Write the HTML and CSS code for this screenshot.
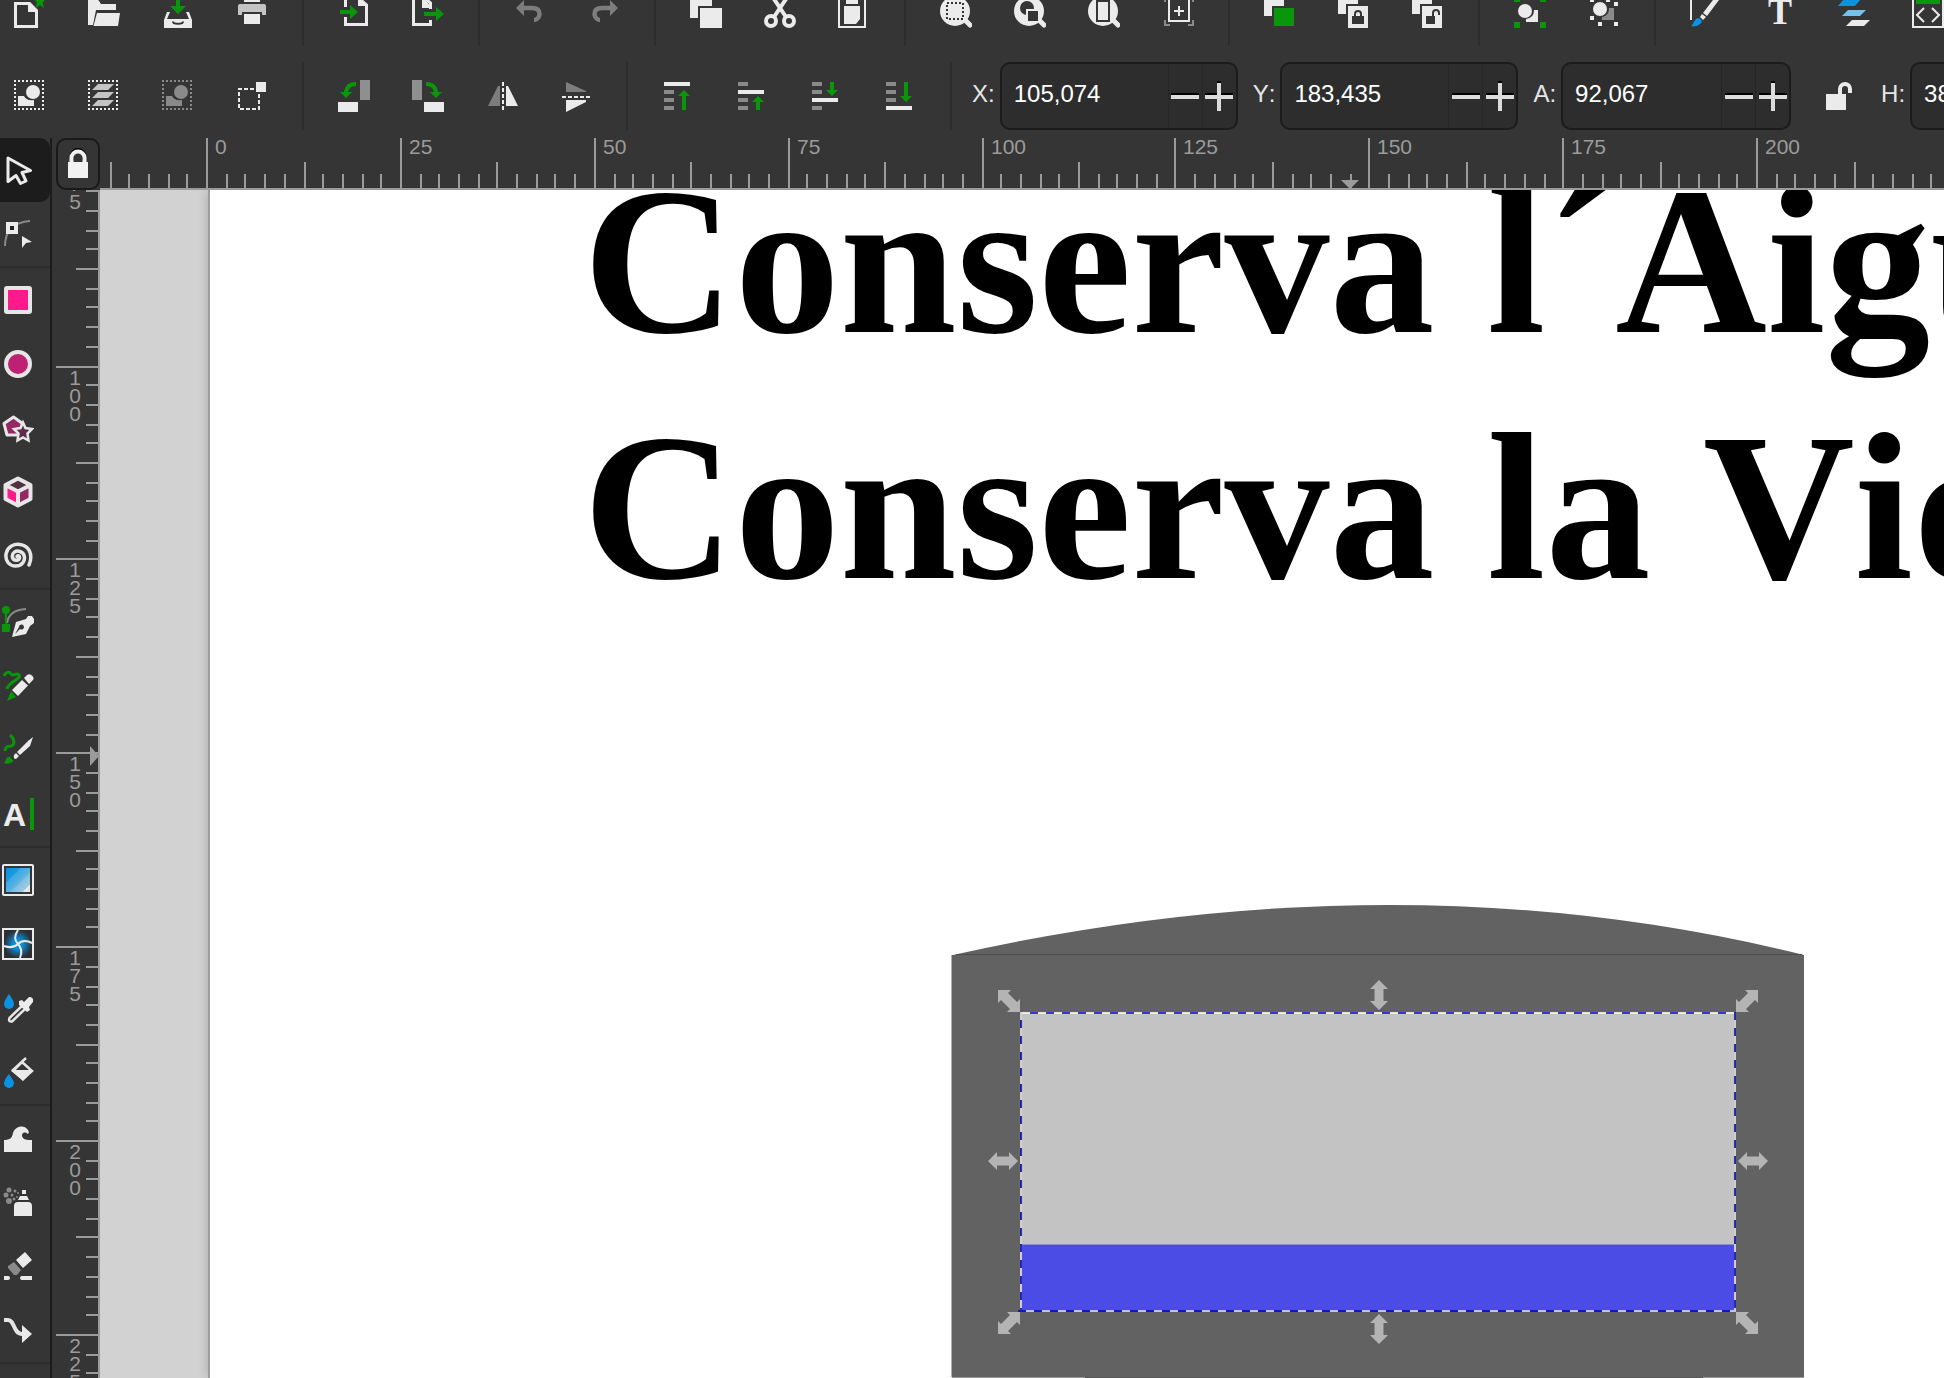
FILE: index.html
```html
<!DOCTYPE html>
<html lang="ca">
<head>
<meta charset="utf-8">
<title>Inkscape</title>
<link rel="stylesheet" href="styles.css">
</head>
<body>
<header class="bars">
  <nav class="bar commands" aria-label="Commands">
    <button class="cmd" aria-label="New"><svg class="icon" viewBox="0 0 32 32"><path class="line3" d="M1.5 7.5H15.5L22.5 14.5V30.500H1.500Z"/><path class="w" d="M14 7v9h9z"/><path class="g" d="M26 -1l1.500 4h4.500l-3.500 3.500 1.500 5.500-4-3-4.500 3 1.500-5.500L20 3h4.500z"/></svg></button>
    <button class="cmd" aria-label="Open"><svg class="icon" viewBox="0 0 32 32"><path class="w" d="M0 2H9L13 8H28V14H8L5 29H0ZM9 17H32L30 30H5.500Z"/></svg></button>
    <button class="cmd" aria-label="Save"><svg class="icon" viewBox="0 0 32 32"><path class="w" d="M5 16H8L5 23H27L24 16H27L30 24V32H2V24Z"/><path d="M11 25.500C11 28.500 21 28.500 21 25.500" fill="none" stroke="#353535" stroke-width="2"/><path class="g" d="M14 0h4v10h6l-8 8-8-8h6z"/></svg></button>
    <button class="cmd" aria-label="Print"><svg class="icon" viewBox="0 0 32 32"><path class="w" d="M8 0H24V6H8Z"/><path class="s" d="M4 8H28a2 2 0 0 1 2 2V19H26V16H6V19H2V10a2 2 0 0 1 2-2Z"/><path class="w" d="M8 18H24V28H8Z"/></svg></button>
    <span class="sep"></span>
    <button class="cmd" aria-label="Import"><svg class="icon" viewBox="0 0 32 32"><path class="line3" d="M7.500 11V1.500H20L28.500 9V28.500H7.500V21"/><path class="w" d="M20 0v10h10z"/><path class="g" d="M2 14h10V9l8 7-8 7v-5H2z"/></svg></button>
    <button class="cmd" aria-label="Export"><svg class="icon" viewBox="0 0 32 32"><path class="line3" d="M18.500 13V7L12 1.500H1.500V28.500H18.500V24"/><path class="w" d="M10 0v12h10z"/><path class="g" d="M12 16h12v-5l8 7-8 7v-5H12z"/></svg></button>
    <span class="sep"></span>
    <button class="cmd" aria-label="Undo"><svg class="icon" viewBox="0 0 32 32"><path d="M9 12H18C24 12 25.500 15 25.500 18S23 24 20 24" fill="none" stroke="#7d7d7d" stroke-width="4.500"/><path fill="#7d7d7d" d="M2 12L10 4V20Z"/></svg></button>
    <button class="cmd" aria-label="Redo"><svg class="icon" viewBox="0 0 32 32"><path d="M23 12H14C8 12 6.500 15 6.500 18S9 24 12 24" fill="none" stroke="#7d7d7d" stroke-width="4.500"/><path fill="#7d7d7d" d="M30 12L22 4V20Z"/></svg></button>
    <span class="sep"></span>
    <button class="cmd" aria-label="Copy"><svg class="icon" viewBox="0 0 32 32"><path class="w" d="M0 0H22V10H8V22H0ZM10 12H32V32H10Z"/></svg></button>
    <button class="cmd" aria-label="Cut"><svg class="icon" viewBox="0 0 32 32"><g fill="none" stroke="#ebebeb"><ellipse cx="7" cy="25" rx="5" ry="5" stroke-width="4"/><ellipse cx="25" cy="25" rx="5" ry="5" stroke-width="4"/><path d="M10 21L24 0M22 21L8 0" stroke-width="4"/></g></svg></button>
    <button class="cmd" aria-label="Paste"><svg class="icon" viewBox="0 0 32 32"><path class="line2" d="M1 1H27V31H1Z"/><path class="w" d="M8 0H20V8H8ZM6 10H22V23L18 28H6Z"/></svg></button>
    <span class="sep"></span>
    <button class="cmd" aria-label="Zoom to selection"><svg class="icon" viewBox="0 0 32 32"><path d="M24 23L30 29" stroke="#ebebeb" stroke-width="5" stroke-linecap="round"/><circle class="w" cx="15" cy="15" r="15"/><path d="M7 7H23V23H7Z" fill="none" stroke="#353535" stroke-width="2" stroke-dasharray="2 2"/></svg></button>
    <button class="cmd" aria-label="Zoom to drawing"><svg class="icon" viewBox="0 0 32 32"><path d="M24 23L30 29" stroke="#ebebeb" stroke-width="5" stroke-linecap="round"/><circle class="w" cx="15" cy="15" r="15"/><circle cx="13" cy="12" r="7" fill="#353535"/><path d="M13 14H25V26H13Z" fill="#353535" stroke="#ebebeb" stroke-width="2"/></svg></button>
    <button class="cmd" aria-label="Zoom to page"><svg class="icon" viewBox="0 0 32 32"><path d="M24 23L30 29" stroke="#ebebeb" stroke-width="5" stroke-linecap="round"/><circle class="w" cx="15" cy="15" r="15"/><path d="M9 5H21V25H9Z" fill="none" stroke="#353535" stroke-width="2"/></svg></button>
    <button class="cmd" aria-label="Center page"><svg class="icon" viewBox="0 0 32 32"><path class="line2" d="M7 3H27V25H7ZM17 10V20M12 15H22"/><path d="M3 24V29H8M26 29H31V24M3 6V1H8M26 1H31V6" fill="none" stroke="#8a8a8a" stroke-width="2"/></svg></button>
    <span class="sep"></span>
    <button class="cmd" aria-label="Duplicate"><svg class="icon" viewBox="0 0 32 32"><path class="w" d="M0 0H20V10H8V20H0Z"/><path class="g" d="M10 12H30V30H10Z"/></svg></button>
    <button class="cmd" aria-label="Clone"><svg class="icon" viewBox="0 0 32 32"><path class="w" d="M0 0H20V8H8V18H0ZM10 10H30V32H10Z"/><path fill="#353535" d="M14 20H26V28H14Z"/><path d="M17 21V18a3 3 0 0 1 6 0V21" fill="none" stroke="#353535" stroke-width="2"/></svg></button>
    <button class="cmd" aria-label="Unlink clone"><svg class="icon" viewBox="0 0 32 32"><path class="w" d="M0 0H20V8H8V18H0ZM10 10H30V32H10Z"/><path fill="#353535" d="M14 20H23V28H14Z"/><path d="M21 21V17a3 3 0 0 1 6 0V19" fill="none" stroke="#353535" stroke-width="2"/></svg></button>
    <span class="sep"></span>
    <button class="cmd" aria-label="Group"><svg class="icon" viewBox="0 0 32 32"><path class="g" d="M0 0H6V6H0ZM26 0H32V6H26ZM0 26H6V32H0ZM26 26H32V32H26Z"/><path class="w" d="M12 26V23Q20 22 20 14H24V26Z"/><circle class="w" cx="11" cy="15" r="7"/></svg></button>
    <button class="cmd" aria-label="Ungroup"><svg class="icon" viewBox="0 0 32 32"><path class="w" d="M2 2H6V6H2ZM2 20H6V24H2ZM10 26H14V30H10ZM26 26H30V30H26ZM26 6H30V10H26ZM18 2H22V6H18Z"/><path fill="#8a8a8a" d="M14 24V21Q21 20 21 12H26V24Z"/><circle class="w" cx="12" cy="13" r="7"/></svg></button>
    <span class="sep"></span>
    <button class="cmd" aria-label="Fill and stroke"><svg class="icon" viewBox="0 0 32 32"><path class="w" d="M0 0H2V24H0ZM26 0H32L17 20L13 17Z"/><path class="w" d="M12 18L16 21L13 24L10 21Z"/><path class="b" d="M9 22L12 25C11 29 6 31 1 30C4 28 4 22 9 22Z"/></svg></button>
    <button class="cmd" aria-label="Text and font"><svg class="icon" viewBox="0 0 32 32"><text class="serif-t" x="16" y="28" text-anchor="middle">T</text></svg></button>
    <button class="cmd" aria-label="Layers and objects"><svg class="icon" viewBox="0 0 32 32"><path class="b" d="M6 3H23L17 10H0Z"/><path fill="#74c1ec" d="M10 14H28L22 20H4Z"/><path class="w" d="M14 24H32L26 30H8Z"/></svg></button>
    <button class="cmd" aria-label="XML editor"><svg class="icon" viewBox="0 0 32 32"><path class="line2" d="M1 1H31V31H1ZM12 12L5 19L12 26M20 12L27 19L20 26"/><path class="g" d="M4 3H28V8H4Z"/></svg></button>
  </nav>

  <nav class="bar controls" aria-label="Selection controls">
    <button class="cmd" aria-label="Select all"><svg class="icon" viewBox="0 0 32 32"><path class="line2" stroke-dasharray="2 2" d="M0 1H30M29 0V30M30 29H0M1 30V0"/><path class="w" d="M4 26V16H10Q12 21 20 20V26Z"/><circle class="w" cx="19" cy="12" r="7"/></svg></button>
    <button class="cmd" aria-label="Select in all layers"><svg class="icon" viewBox="0 0 32 32"><path class="line2" stroke-dasharray="2 2" d="M0 1H30M29 0V30M30 29H0M1 30V0"/><path class="s" d="M10 4H26L20 10H4ZM10 12H26L20 18H4ZM10 20H26L20 26H4Z"/></svg></button>
    <button class="cmd" aria-label="Deselect"><svg class="icon" viewBox="0 0 32 32"><path fill="none" stroke="#8a8a8a" stroke-width="2" stroke-dasharray="2 2" d="M0 1H30M29 0V30M30 29H0M1 30V0"/><path fill="#8a8a8a" d="M4 26V16H10Q12 21 20 20V26Z"/><circle fill="#8a8a8a" cx="19" cy="12" r="7"/></svg></button>
    <button class="cmd" aria-label="Rubber-band select"><svg class="icon" viewBox="0 0 32 32"><path class="line2" stroke-dasharray="4 2" d="M18 9H3V29H23V13"/><path class="w" d="M20 2H30V12H20Z"/></svg></button>
    <span class="sep"></span>
    <button class="cmd" aria-label="Rotate left"><svg class="icon" viewBox="0 0 32 32"><path fill="#8f8f8f" d="M22 0H32V20H22Z"/><path class="w" d="M0 22H20V32H0Z"/><path d="M18 4Q8 4 8 14" fill="none" stroke="#0a960a" stroke-width="4"/><path class="g" d="M2 12H14L8 18Z"/></svg></button>
    <button class="cmd" aria-label="Rotate right"><svg class="icon" viewBox="0 0 32 32"><path fill="#8f8f8f" d="M0 0H10V20H0Z"/><path class="w" d="M12 22H32V32H12Z"/><path d="M14 4Q24 4 24 14" fill="none" stroke="#0a960a" stroke-width="4"/><path class="g" d="M18 12H30L24 18Z"/></svg></button>
    <button class="cmd" aria-label="Flip horizontal"><svg class="icon" viewBox="0 0 32 32"><path fill="#7d7d7d" d="M12 6H14V26H2Z"/><path class="w" d="M20 6H22L32 26H20Z"/><path class="line2" stroke-dasharray="4 2" d="M17 2V30"/></svg></button>
    <button class="cmd" aria-label="Flip vertical"><svg class="icon" viewBox="0 0 32 32"><path fill="#7d7d7d" d="M6 2L26 11V12H6Z"/><path class="w" d="M6 20H26V22L6 32Z"/><path class="line2" stroke-dasharray="4 2" d="M2 17H30"/></svg></button>
    <span class="sep"></span>
    <button class="cmd" aria-label="Raise to top"><svg class="icon" viewBox="0 0 32 32"><path class="w" d="M2 2H28V6H2Z"/><path fill="#8a8a8a" d="M2 10H12V14H2ZM2 18H12V22H2ZM2 26H12V30H2Z"/><path class="g" d="M20 30V16H16L22 10L28 16H24V30Z"/></svg></button>
    <button class="cmd" aria-label="Raise"><svg class="icon" viewBox="0 0 32 32"><path class="w" d="M2 10H28V14H2Z"/><path fill="#8a8a8a" d="M2 2H12V6H2ZM2 18H12V22H2ZM2 26H12V30H2Z"/><path class="g" d="M20 30V22H16L22 16L28 22H24V30Z"/></svg></button>
    <button class="cmd" aria-label="Lower"><svg class="icon" viewBox="0 0 32 32"><path class="w" d="M2 18H28V22H2Z"/><path fill="#8a8a8a" d="M2 2H12V6H2ZM2 10H12V14H2ZM2 26H12V30H2Z"/><path class="g" d="M20 2V10H16L22 16L28 10H24V2Z"/></svg></button>
    <button class="cmd" aria-label="Lower to bottom"><svg class="icon" viewBox="0 0 32 32"><path class="w" d="M2 26H28V30H2Z"/><path fill="#8a8a8a" d="M2 2H12V6H2ZM2 10H12V14H2ZM2 18H12V22H2Z"/><path class="g" d="M20 2V16H16L22 22L28 16H24V2Z"/></svg></button>
    <span class="sep"></span>
    <div class="fields">
      <div class="field">
        <label for="pos-x">X:</label>
        <div class="spin"><input id="pos-x" type="text" value="105,074"><button aria-label="Decrease X"><svg class="step" viewBox="0 0 28 30"><path d="M0 12H28V14H0Z"/><path class="st" d="M0 14H28V18H0Z"/></svg></button><button aria-label="Increase X"><svg class="step" viewBox="0 0 28 30"><path d="M0 12H28V14H0ZM12 0H16V4H12Z"/><path class="st" d="M0 14H12V2H16V14H28V18H16V30H12V18H0Z"/></svg></button></div>
      </div>
      <div class="field">
        <label for="pos-y">Y:</label>
        <div class="spin"><input id="pos-y" type="text" value="183,435"><button aria-label="Decrease Y"><svg class="step" viewBox="0 0 28 30"><path d="M0 12H28V14H0Z"/><path class="st" d="M0 14H28V18H0Z"/></svg></button><button aria-label="Increase Y"><svg class="step" viewBox="0 0 28 30"><path d="M0 12H28V14H0ZM12 0H16V4H12Z"/><path class="st" d="M0 14H12V2H16V14H28V18H16V30H12V18H0Z"/></svg></button></div>
      </div>
      <div class="field">
        <label for="size-w">A:</label>
        <div class="spin narrow"><input id="size-w" type="text" value="92,067"><button aria-label="Decrease width"><svg class="step" viewBox="0 0 28 30"><path d="M0 12H28V14H0Z"/><path class="st" d="M0 14H28V18H0Z"/></svg></button><button aria-label="Increase width"><svg class="step" viewBox="0 0 28 30"><path d="M0 12H28V14H0ZM12 0H16V4H12Z"/><path class="st" d="M0 14H12V2H16V14H28V18H16V30H12V18H0Z"/></svg></button></div>
      </div>
      <button class="ratio" aria-label="Lock ratio"><svg class="icon" viewBox="0 0 32 32"><path class="w" d="M6 14H26V30H6Z"/><path d="M20 15V9a5 5 0 0 1 10 0V13" fill="none" stroke="#ebebeb" stroke-width="4"/></svg></button>
      <div class="field">
        <label for="size-h">H:</label>
        <div class="spin narrow"><input id="size-h" type="text" value="38,474"><button aria-label="Decrease height"><svg class="step" viewBox="0 0 28 30"><path d="M0 12H28V14H0Z"/><path class="st" d="M0 14H28V18H0Z"/></svg></button><button aria-label="Increase height"><svg class="step" viewBox="0 0 28 30"><path d="M0 12H28V14H0ZM12 0H16V4H12Z"/><path class="st" d="M0 14H12V2H16V14H28V18H16V30H12V18H0Z"/></svg></button></div>
      </div>
    </div>
  </nav>
</header>

<main class="work">
  <nav class="toolbox" aria-label="Tools">
    <button class="tool active" aria-label="Selector"><svg class="icon" viewBox="0 0 32 32"><path class="line3" stroke-linejoin="round" d="M6 4L28.500 16.500L20 18.500L24 27L18.500 29.500L14 21.500L6 27.500Z"/></svg></button>
    <button class="tool" aria-label="Node"><svg class="icon" viewBox="0 0 32 32"><path d="M3 28Q3 5 28 3" fill="none" stroke="#8a8a8a" stroke-width="2"/><path d="M6 6H14V14H6Z" fill="#222" stroke="#ebebeb" stroke-width="4"/><path class="w" d="M20 18L30 24L24 25L20 30Z"/></svg></button>
    <hr>
    <button class="tool" aria-label="Rectangle"><svg class="icon" viewBox="0 0 32 32"><rect x="4" y="4" width="24" height="24" rx="1" fill="#ff1a8c" stroke="#e6e6e6" stroke-width="4"/></svg></button>
    <button class="tool" aria-label="Ellipse"><svg class="icon" viewBox="0 0 32 32"><circle cx="16" cy="16" r="12" fill="#be2172" stroke="#e6e6e6" stroke-width="4"/></svg></button>
    <button class="tool" aria-label="Star"><svg class="icon" viewBox="0 0 32 32"><path d="M11.500 5L20.500 11.500L17.500 23H5L2 11.500Z" fill="#942863" stroke="#e6e6e6" stroke-width="3" stroke-linejoin="round"/><path d="M21 10.500L23.500 16L30 17L25.500 21.500L26.500 28.500L21 25.500L15.500 28.500L16.500 21.500L12 17L18.500 16Z" fill="#5c2c48" stroke="#e6e6e6" stroke-width="2.500"/></svg></button>
    <button class="tool" aria-label="3D box"><svg class="icon" viewBox="0 0 32 32"><path fill="#503042" d="M16 3L28 9L16 15L4 9Z"/><path fill="#ff1a8c" d="M4 9L16 15V29L4 23Z"/><path fill="#942863" d="M28 9L16 15V29L28 23Z"/><path d="M16 2.500L28.500 9V23L16 29.500L3.500 23V9ZM3.500 9L16 15.500L28.500 9M16 15V29" fill="none" stroke="#e6e6e6" stroke-width="4" stroke-linejoin="round"/></svg></button>
    <button class="tool" aria-label="Spiral"><svg class="icon" viewBox="0 0 32 32"><path d="M15 16.500C15 15 18 15.500 17.500 18C17 21 11.500 21 10.500 17.500C9.500 12.500 14 10 18 11.500C23 13 23.500 19 21 22.500C17.500 27.500 9.500 27 6 22.500C2 17 4 9 9.500 6C16 2.500 24.500 5 27.500 11C29.500 15.500 29 20.500 27 25" fill="none" stroke="#e6e6e6" stroke-width="3.500" stroke-linecap="round"/></svg></button>
    <hr>
    <button class="tool" aria-label="Pen"><svg class="icon" viewBox="0 0 32 32"><path d="M5 17Q7 4 24 3" fill="none" stroke="#8a8a8a" stroke-width="2"/><circle class="g" cx="4" cy="4" r="4"/><path class="g" d="M3 4H5V18H8V26H0V18H3Z"/><path class="w" fill-rule="evenodd" d="M10 31L14 16L24 13L26 10H30L32 13V17L28 20L24 28ZM13 28L18 23A2.500 2.500 0 1 0 17 21Z"/></svg></button>
    <button class="tool" aria-label="Pencil"><svg class="icon" viewBox="0 0 32 32"><path d="M2 6C4 1 8 2 9 4C11 7 14 2 17 5C20 9 6 12 5 19" fill="none" stroke="#0a960a" stroke-width="3"/><path class="g" d="M9 21L14 27L5 31Z"/><path class="w" d="M10 20L20 10L26 15.500L16 26ZM22 8L25 5Q28 3 30.500 6T30 11L27 14Z"/></svg></button>
    <button class="tool" aria-label="Calligraphy"><svg class="icon" viewBox="0 0 32 32"><path d="M8 1C13 5 13 11 9 12C5 12 3 14 3 17" fill="none" stroke="#0a960a" stroke-width="3"/><path class="g" d="M8 23L11.500 27Q8 31 2 29Q4 27 4 25Q6 22 8 23Z"/><path class="w" d="M31 3L28 12L18 21L15 18L26 7ZM14 19L17 22L14 25Q11 25 12 21Z"/></svg></button>
    <button class="tool" aria-label="Text"><svg class="icon" viewBox="0 0 32 32"><text class="sans-a" x="1" y="28">A</text><path class="g" d="M28 0H32V32H28Z"/></svg></button>
    <hr>
    <button class="tool" aria-label="Gradient"><svg class="icon" viewBox="0 0 32 32"><defs><linearGradient id="lg" x1="0" y1="0" x2="1" y2="1"><stop offset="0" stop-color="#078fdf"/><stop offset=".3" stop-color="#1c9be2"/><stop offset=".3" stop-color="#3aa7e3"/><stop offset=".6" stop-color="#62b5e3"/><stop offset=".6" stop-color="#7fbfe3"/><stop offset=".85" stop-color="#9dcbe4"/><stop offset=".85" stop-color="#e6e6e6"/></linearGradient></defs><rect class="line2" x="1" y="1" width="30" height="30" rx="1"/><path fill="url(#lg)" d="M4 4H28V28H4Z"/></svg></button>
    <button class="tool" aria-label="Mesh"><svg class="icon" viewBox="0 0 32 32"><defs><radialGradient id="rg"><stop offset="0" stop-color="#0a93e2"/><stop offset=".4" stop-color="#0f86cb"/><stop offset="1" stop-color="#2b2f33"/></radialGradient></defs><path fill="url(#rg)" d="M2 2H30V30H2Z"/><path class="line2" d="M16 16C12 12 12 8 16 2M16 16C20 12 24 12 30 15M16 16C20 20 20 25 18 30M16 16C12 20 8 20 2 18"/><rect class="line2" x="1" y="1" width="30" height="30"/></svg></button>
    <button class="tool" aria-label="Dropper"><svg class="icon" viewBox="0 0 32 32"><path class="b" d="M7 2Q12 9 12 12A5 5 0 0 1 2 12Q2 9 7 2Z"/><path d="M21 13L7.500 26Q6 30 10 29.500L24 16" fill="none" stroke="#e6e6e6" stroke-width="2.500"/><path class="w" d="M17 9L20 8L22 10L27 5Q32 5 31 10L27 15L28 18L25 20L17 13Z"/></svg></button>
    <button class="tool" aria-label="Paint bucket"><svg class="icon" viewBox="0 0 32 32"><path class="b" d="M7 18Q12 25 12 27A5 5 0 0 1 2 27Q2 24 7 18Z"/><path d="M24 2L10 15M20 6L30 15L21 23L11 15Z" fill="none" stroke="#e6e6e6" stroke-width="2.500"/><path class="w" d="M9 14H31L21 25Z"/></svg></button>
    <hr>
    <button class="tool" aria-label="Tweak"><svg class="icon" viewBox="0 0 32 32"><path class="w" d="M2 18C8 18 10 16 11 11C13 4 22 2 26 8C27 10 27 11 26 12C22 9 20 11 20 14C21 18 25 18 30 18V30H2Z"/></svg></button>
    <button class="tool" aria-label="Spray"><svg class="icon" viewBox="0 0 32 32"><path class="w" d="M20 4H24V8H20ZM18 10H25L27 14H16ZM12 30V20Q12 16 16 16H26Q30 16 30 20V30Z"/><g fill="#8a8a8a"><circle cx="7" cy="4" r="2.500"/><circle cx="4" cy="9" r="2.500"/><circle cx="7" cy="15" r="3"/><circle cx="13" cy="5" r="1.500"/><circle cx="10" cy="9" r="1.500"/><circle cx="12" cy="13" r="1.500"/><circle cx="16" cy="7" r="1"/><circle cx="15" cy="11" r="1"/></g></svg></button>
    <button class="tool" aria-label="Eraser"><svg class="icon" viewBox="0 0 32 32"><path class="w" d="M23 2L30 10L21 18L14 10ZM2 26H6Q8 26 8 28T6 30H2ZM18 28Q18 26 20 26H30V30H20Q18 30 18 28Z"/><path fill="#8a8a8a" d="M12 12L19 20L15 25H12L6 18V16Z"/></svg></button>
    <button class="tool" aria-label="Connector"><svg class="icon" viewBox="0 0 32 32"><path d="M2 6H6C13 6 11 20 20 20H22" fill="none" stroke="#e6e6e6" stroke-width="4"/><path class="w" d="M20 11L30 20L20 29Z"/></svg></button>
    <hr>
  </nav>

  <section class="desk">
    <button class="guide-lock" aria-label="Lock guides"><svg width="20" height="32" viewBox="0 0 20 32"><path d="M4 12V8a6 6 0 0 1 12 0V12" fill="none" stroke="#000" stroke-width="4"/><path d="M3.500 16V10a6.500 6.500 0 0 1 13 0V16" fill="none" stroke="#f2f2f2" stroke-width="4"/><path fill="#f2f2f2" d="M0 14H20V30H0Z"/></svg></button>
    <svg class="ruler ruler-h" id="ruler-h"></svg>
    <svg class="ruler ruler-v" id="ruler-v"></svg>
    <div class="canvas">
      <div class="page"></div>
      <svg class="art">
        <defs>
          <path id="diag" d="M0 0H13L10 3L19 12L22 9V22H9L12 19L3 10L0 13Z"/>
          <path id="vert" d="M0 -15L9 -6H4.500V6H9L0 15L-9 6H-4.500V-6H-9Z"/>
        </defs>
        <g transform="translate(-100 -190)">
          <text class="headline" x="583" y="332">Conserva l´Aigua</text>
          <text class="headline" x="583" y="578">Conserva la Vida</text>
          <path fill="#626262" d="M953 955Q1400 855 1804 955Z"/>
          <path fill="#626262" d="M951.500 955H1804V1377H951.500Z"/>
          <path fill="#4d4d4d" d="M956 954H1802V955H956Z"/>
          <path fill="#999" d="M952 1377H1804V1378H952Z"/>
          <path fill="#555" d="M1085 1377H1703V1378H1085Z"/>
          <path fill="#c3c3c3" d="M1021 1013H1735V1311H1021Z"/>
          <path fill="#4b4be6" d="M1021 1245H1735V1311H1021Z"/>
          <path fill="#8c8cc0" d="M1021 1244H1735V1245H1021Z"/>
          <g fill="none" stroke-width="2">
            <path stroke="#ebe9e4" d="M1020 1013H1736"/>
            <path stroke="#cfcfcf" d="M1021 1012V1312M1735 1012V1312"/>
            <path stroke="#c3c3ee" d="M1020 1311H1736"/>
            <g stroke-dasharray="8 8">
              <path stroke="#3a3ac6" d="M1030 1013H1734"/>
              <path stroke="#2828a8" d="M1021 1020V1312M1735 1012V1312"/>
              <path stroke="#1414cc" d="M1018 1311H1734"/>
            </g>
          </g>
          <g fill="#b4b4b4">
            <use href="#diag" transform="translate(998 990)"/>
            <use href="#diag" transform="translate(1758 990) scale(-1 1)"/>
            <use href="#diag" transform="translate(1020 1312) scale(-1 1)"/>
            <use href="#diag" transform="translate(1736 1312)"/>
            <use href="#vert" transform="translate(1379 995)"/>
            <use href="#vert" transform="translate(1379 1329)"/>
            <use href="#vert" transform="translate(1003 1161) rotate(90)"/>
            <use href="#vert" transform="translate(1753 1161) rotate(90)"/>
          </g>
        </g>
      </svg>
    </div>
  </section>
</main>
<script src="rulers.js"></script>
</body>
</html>
```
FILE: styles.css
```css
* { box-sizing: border-box; }

body {
  margin: 0;
  height: 100vh;
  display: flex;
  flex-direction: column;
  overflow: hidden;
  background: #353535;
  color: #e6e6e6;
  font-family: "Liberation Sans", Arial, sans-serif;
  font-size: 24px;
  font-kerning: none;
}

button {
  margin: 0;
  padding: 0;
  border: 0;
  background: none;
  color: inherit;
  font: inherit;
}

svg { display: block; }

.w { fill: #ebebeb; }
.s { fill: #c4c4c4; }
.g { fill: #0a960a; }
.b { fill: #0a93e2; }
.line2 { fill: none; stroke: #ebebeb; stroke-width: 2; }
.line3 { fill: none; stroke: #ebebeb; stroke-width: 3; }

.icon { width: 32px; height: 32px; }

/* Toolbars */
.bars {
  flex: none;
  display: flex;
  flex-direction: column;
  gap: 16px;
  margin: -22px 0 0 -7px;
  padding-bottom: 8px;
}

.bar {
  display: flex;
  align-items: center;
  height: 68px;
  overflow: hidden;
}

.cmd {
  flex: none;
  display: flex;
  align-items: center;
  justify-content: center;
  width: 74px;
  height: 68px;
}

.sep {
  flex: none;
  width: 2px;
  height: 68px;
  margin: 0 13px;
  background: #2d2d2d;
}

.serif-t {
  font: bold 36px "Liberation Serif", "Times New Roman", serif;
  fill: #ebebeb;
}

.sans-a {
  font: bold 32px "Liberation Sans", Arial, sans-serif;
  fill: #ebebeb;
}

.fields {
  flex: none;
  display: flex;
  align-items: center;
  gap: 15px;
  padding-left: 7px;
}

.field {
  display: flex;
  align-items: center;
  gap: 5px;
}

.field label { padding-bottom: 4px; }

.spin {
  display: flex;
  width: 238px;
  height: 68px;
  border: 2px solid #1c1c1c;
  border-radius: 10px;
  background: #2d2d2d;
  overflow: hidden;
}

.spin.narrow { width: 230px; }

.spin input {
  flex: 1;
  min-width: 0;
  padding: 0 0 4px 12px;
  border: 0;
  outline: 0;
  background: none;
  color: #fff;
  font: inherit;
}

.spin button {
  flex: none;
  display: flex;
  align-items: center;
  justify-content: center;
  width: 34px;
  border-left: 1px solid #262626;
}

.step { width: 28px; height: 30px; }
.st { fill: #dcdcdc; }

.ratio {
  flex: none;
  display: flex;
  align-items: center;
  justify-content: center;
  width: 60px;
  height: 68px;
}

/* Work area */
.work {
  flex: 1;
  min-height: 0;
  display: flex;
}

.toolbox {
  flex: none;
  display: flex;
  flex-direction: column;
  width: 52px;
  border-right: 2px solid #1c1c1c;
  overflow: hidden;
}

.tool {
  flex: none;
  display: flex;
  align-items: center;
  width: 50px;
  height: 64px;
  padding-left: 2px;
}

.tool.active {
  border-radius: 0 10px 10px 0;
  background: #1c1c1c;
}

.toolbox hr {
  flex: none;
  width: 100%;
  height: 2px;
  margin: 0;
  border: 0;
  background: #2d2d2d;
}

.desk {
  flex: 1;
  min-width: 0;
  display: grid;
  grid-template-columns: 48px minmax(0, 1fr);
  grid-template-rows: 52px minmax(0, 1fr);
}

.guide-lock {
  display: flex;
  align-items: center;
  justify-content: center;
  width: 44px;
  height: 52px;
  margin-left: 4px;
  border: 2px solid #1a1a1a;
  border-radius: 10px;
}

.ruler {
  width: 100%;
  height: 100%;
  overflow: hidden;
  fill: #9b9b9b;
  font-size: 21px;
}

.canvas {
  position: relative;
  display: flex;
  padding-left: 108px;
  background: #d2d2d2;
  overflow: hidden;
}

.page {
  flex: 1;
  border-left: 2px solid #9d9d9d;
  background: #fff;
  box-shadow: 0 0 10px rgba(0, 0, 0, .2);
}

.art {
  position: absolute;
  inset: 0;
  width: 100%;
  height: 100%;
}

.headline {
  font: bold 210px "Liberation Serif", "Times New Roman", serif;
  font-kerning: none;
  fill: #000;
}
```
FILE: rulers.js
```js
// Draws the ticks and numbers of both rulers; one document unit is 7.75px.
const STEP = 7.75 * 2.5;
const ORIGIN_X = 106.2;
const ORIGIN_Y = 175.1;
const snap = (v) => Math.round(v / 2) * 2;

function add(svg, name, attrs, text) {
  const el = document.createElementNS("http://www.w3.org/2000/svg", name);
  for (const key in attrs) el.setAttribute(key, attrs[key]);
  if (text !== undefined) el.textContent = text;
  svg.appendChild(el);
}

function tickLength(i, full, half, small) {
  if (i % 10 === 0) return full;
  return i % 5 === 0 ? half : small;
}

function drawHorizontal(svg) {
  const width = svg.clientWidth;
  for (let i = -5; ORIGIN_X + i * STEP < width; i++) {
    const x = snap(ORIGIN_X + i * STEP);
    const len = tickLength(i, 50, 26, 14);
    add(svg, "rect", { x, y: 50 - len, width: 2, height: len });
    if (i % 10 === 0) add(svg, "text", { x: x + 9, y: 16 }, i * 2.5);
  }
  add(svg, "rect", { x: 0, y: 50, width, height: 2 });
  add(svg, "path", { d: "M1241 42H1259L1250 51Z" });
}

function drawVertical(svg) {
  const height = svg.clientHeight;
  for (let i = -10; ORIGIN_Y + i * STEP < height; i++) {
    const y = snap(ORIGIN_Y + i * STEP);
    const len = tickLength(i, 42, 22, 12);
    add(svg, "rect", { x: 46 - len, y, width: len, height: 2 });
    if (i % 10 === 0) {
      String(100 + i * 2.5).split("").forEach((digit, n) => {
        add(svg, "text", { x: 23, y: y + 19 + n * 18, "text-anchor": "middle" }, digit);
      });
    }
  }
  add(svg, "rect", { x: 46, y: 0, width: 2, height });
  add(svg, "path", { d: "M38 556L47 566L38 576Z" });
}

drawHorizontal(document.getElementById("ruler-h"));
drawVertical(document.getElementById("ruler-v"));
```
